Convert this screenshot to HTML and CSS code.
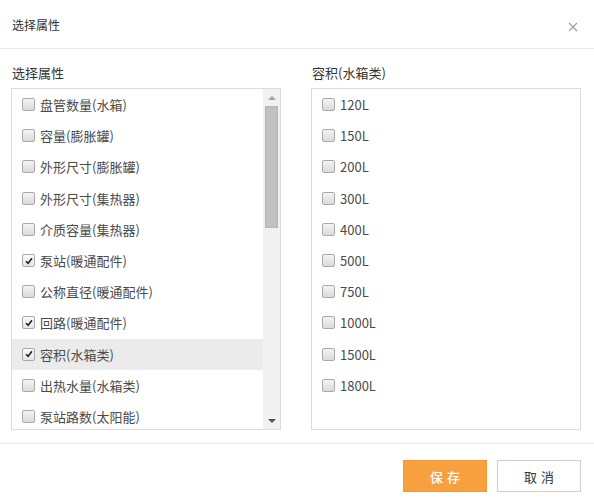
FILE: index.html
```html
<!DOCTYPE html>
<html lang="zh-CN">
<head>
<meta charset="utf-8">
<title>选择属性</title>
<link rel="stylesheet" href="styles.css">
</head>
<body>
<div class="dialog">
  <div class="dialog-header">
    <span class="dialog-title">选择属性</span>
    <span class="close" aria-label="关闭">
      <svg width="10" height="10" viewBox="0 0 10 10"><path d="M1 1L9 9M9 1L1 9" stroke="#a0a0a0" stroke-width="1.2" fill="none"/></svg>
    </span>
  </div>
  <div class="dialog-body">
    <div class="panel">
      <div class="panel-label">选择属性</div>
      <div class="listbox">
        <ul class="list">
          <li class="item"><span class="cb"></span>盘管数量(水箱)</li>
          <li class="item"><span class="cb"></span>容量(膨胀罐)</li>
          <li class="item"><span class="cb"></span>外形尺寸(膨胀罐)</li>
          <li class="item"><span class="cb"></span>外形尺寸(集热器)</li>
          <li class="item"><span class="cb"></span>介质容量(集热器)</li>
          <li class="item"><span class="cb checked"><svg width="8" height="8" viewBox="0 0 8 8"><path d="M1 4.2L3.1 6.3L7 1.3" stroke="#222" stroke-width="1.6" fill="none"/></svg></span>泵站(暖通配件)</li>
          <li class="item"><span class="cb"></span>公称直径(暖通配件)</li>
          <li class="item"><span class="cb checked"><svg width="8" height="8" viewBox="0 0 8 8"><path d="M1 4.2L3.1 6.3L7 1.3" stroke="#222" stroke-width="1.6" fill="none"/></svg></span>回路(暖通配件)</li>
          <li class="item active"><span class="cb checked"><svg width="8" height="8" viewBox="0 0 8 8"><path d="M1 4.2L3.1 6.3L7 1.3" stroke="#222" stroke-width="1.6" fill="none"/></svg></span>容积(水箱类)</li>
          <li class="item"><span class="cb"></span>出热水量(水箱类)</li>
          <li class="item"><span class="cb"></span>泵站路数(太阳能)</li>
        </ul>
        <div class="scrollbar">
          <div class="sb-btn"><span class="arrow-up"></span></div>
          <div class="sb-track"><div class="sb-thumb"></div></div>
          <div class="sb-btn"><span class="arrow-down"></span></div>
        </div>
      </div>
    </div>
    <div class="panel">
      <div class="panel-label">容积(水箱类)</div>
      <div class="listbox">
        <ul class="list">
          <li class="item"><span class="cb"></span>120L</li>
          <li class="item"><span class="cb"></span>150L</li>
          <li class="item"><span class="cb"></span>200L</li>
          <li class="item"><span class="cb"></span>300L</li>
          <li class="item"><span class="cb"></span>400L</li>
          <li class="item"><span class="cb"></span>500L</li>
          <li class="item"><span class="cb"></span>750L</li>
          <li class="item"><span class="cb"></span>1000L</li>
          <li class="item"><span class="cb"></span>1500L</li>
          <li class="item"><span class="cb"></span>1800L</li>
        </ul>
      </div>
    </div>
  </div>
  <div class="dialog-footer">
    <button class="btn btn-primary">保存</button>
    <button class="btn btn-default">取消</button>
  </div>
</div>
</body>
</html>
```

FILE: styles.css
```css
* { box-sizing: border-box; }
html, body {
  margin: 0;
  padding: 0;
  background: #fff;
}
body {
  font-family: "Noto Sans CJK SC", "Noto Sans", "Liberation Sans", sans-serif;
  color: #555;
  font-size: 13px;
}
.dialog {
  width: 594px;
  height: 502px;
  display: flex;
  flex-direction: column;
}
.dialog-header {
  height: 49px;
  border-bottom: 1px solid #e6e6e6;
  display: flex;
  align-items: center;
  justify-content: space-between;
  padding: 0 16px 0 12px;
}
.dialog-title {
  font-size: 12px;
  color: #333;
}
.close {
  display: flex;
  margin-top: 6px;
}
.dialog-body {
  display: grid;
  grid-template-columns: 270px 270px;
  column-gap: 30px;
  padding: 14px 13px 13px 11px;
  border-bottom: 1px solid #e6e6e6;
}
.panel-label {
  height: 20px;
  line-height: 20px;
  font-size: 13px;
  color: #333;
  padding-left: 1px;
  margin-bottom: 5px;
}
.listbox {
  height: 342px;
  border: 1px solid #dcdcdc;
  display: flex;
  overflow: hidden;
}
.list {
  list-style: none;
  margin: 0;
  padding: 0;
  flex: 1;
  overflow: hidden;
}
.item {
  height: 31.2px;
  display: flex;
  align-items: center;
  padding-left: 10px;
  white-space: nowrap;
  color: #4a4a4a;
}
.item.active { background: #ebebeb; }
.cb {
  width: 13px;
  height: 13px;
  border: 1px solid #a9a9a9;
  border-radius: 2px;
  background: linear-gradient(#f4f4f4, #dadada);
  margin-right: 5px;
  display: inline-flex;
  align-items: center;
  justify-content: center;
  flex: none;
}
.cb.checked { background: linear-gradient(#fafafa, #e6e6e6); }
.scrollbar {
  width: 17px;
  flex: none;
  background: #f1f1f1;
  display: flex;
  flex-direction: column;
}
.sb-btn {
  height: 17px;
  display: flex;
  align-items: center;
  justify-content: center;
}
.sb-track {
  flex: 1;
  padding: 0 2px;
}
.sb-thumb {
  height: 122px;
  background: #c1c1c1;
  border: 1px solid #b5b5b5;
}
.arrow-up {
  width: 0;
  height: 0;
  border-left: 4px solid transparent;
  border-right: 4px solid transparent;
  border-bottom: 4px solid #a3a3a3;
}
.arrow-down {
  width: 0;
  height: 0;
  border-left: 4px solid transparent;
  border-right: 4px solid transparent;
  border-top: 4px solid #505050;
}
.dialog-footer {
  display: flex;
  justify-content: flex-end;
  gap: 10px;
  padding: 16px 13px 0 0;
}
.btn {
  width: 84px;
  height: 32px;
  font-family: "Noto Sans CJK SC", "Noto Sans", sans-serif;
  font-size: 13px;
  letter-spacing: 4px;
  text-indent: 4px;
  cursor: pointer;
}
.btn-primary {
  background: #f7a03f;
  border: 1px solid #f49a33;
  color: #fff;
  font-weight: 500;
}
.btn-default {
  background: #fff;
  border: 1px solid #cfcfcf;
  color: #333;
}
```
